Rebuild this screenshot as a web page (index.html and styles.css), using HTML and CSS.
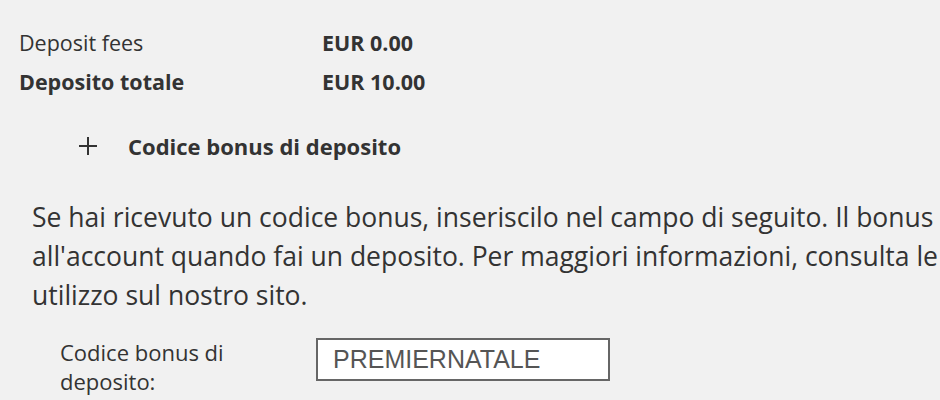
FILE: index.html
```html
<!DOCTYPE html>
<html lang="it">
  <head>
    <title>Deposito</title>
    <meta name="viewport" content="width=device-width, initial-scale=1">
    <link rel="stylesheet" href="styles.css">
  </head>
  <body>
    <div class="summary">
      <div class="summary-row">
        <span>Deposit fees</span>
        <strong>EUR 0.00</strong>
      </div>
      <div class="summary-row total">
        <span>Deposito totale</span>
        <strong>EUR 10.00</strong>
      </div>
    </div>

    <div class="bonus-toggle">
      <svg class="plus" width="20" height="18" viewBox="0 0 20 18">
        <path d="M1 9h18M10 0v18" stroke="#333" stroke-width="2" fill="none"/>
      </svg>
      <span>Codice bonus di deposito</span>
    </div>

    <p class="bonus-info">Se hai ricevuto un codice bonus, inseriscilo nel campo di seguito. Il bonus<br>all'account quando fai un deposito. Per maggiori informazioni, consulta le<br>utilizzo sul nostro sito.</p>

    <div class="bonus-form">
      <label for="bonusCode">Codice bonus di<br>deposito:</label>
      <input id="bonusCode" type="text" value="PREMIERNATALE">
    </div>
  </body>
</html>
```

FILE: styles.css
```css
body {
  margin: 0;
  background-color: #f1f1f1;
  color: #333;
  font-family: "Open Sans", "DejaVu Sans", sans-serif;
  overflow: hidden;
}
.summary {
  padding: 23px 0 0 19px;
  font-size: 21.5px;
  line-height: 39px;
}
.summary-row {
  display: grid;
  grid-template-columns: 303px auto;
}
.summary-row strong {
  font-weight: 700;
}
.summary-row.total span {
  font-weight: 700;
}
.bonus-toggle {
  display: flex;
  align-items: center;
  gap: 30px;
  margin-top: 30px;
  padding-left: 78px;
  font-size: 22px;
  font-weight: 700;
  line-height: 30px;
}
.bonus-info {
  margin: 37px 0 0 32px;
  font-size: 26.5px;
  line-height: 39px;
  white-space: nowrap;
}
.bonus-form {
  display: flex;
  align-items: flex-start;
  margin-top: 23px;
  padding-left: 60px;
}
.bonus-form label {
  width: 256px;
  font-size: 22px;
  line-height: 29px;
}
.bonus-form input {
  box-sizing: border-box;
  width: 294px;
  height: 43px;
  margin: 0;
  padding: 0 15px;
  border: 2px solid #666;
  background: #fff;
  color: #555;
  font-family: "Liberation Sans", Arial, sans-serif;
  font-size: 25px;
}
```
